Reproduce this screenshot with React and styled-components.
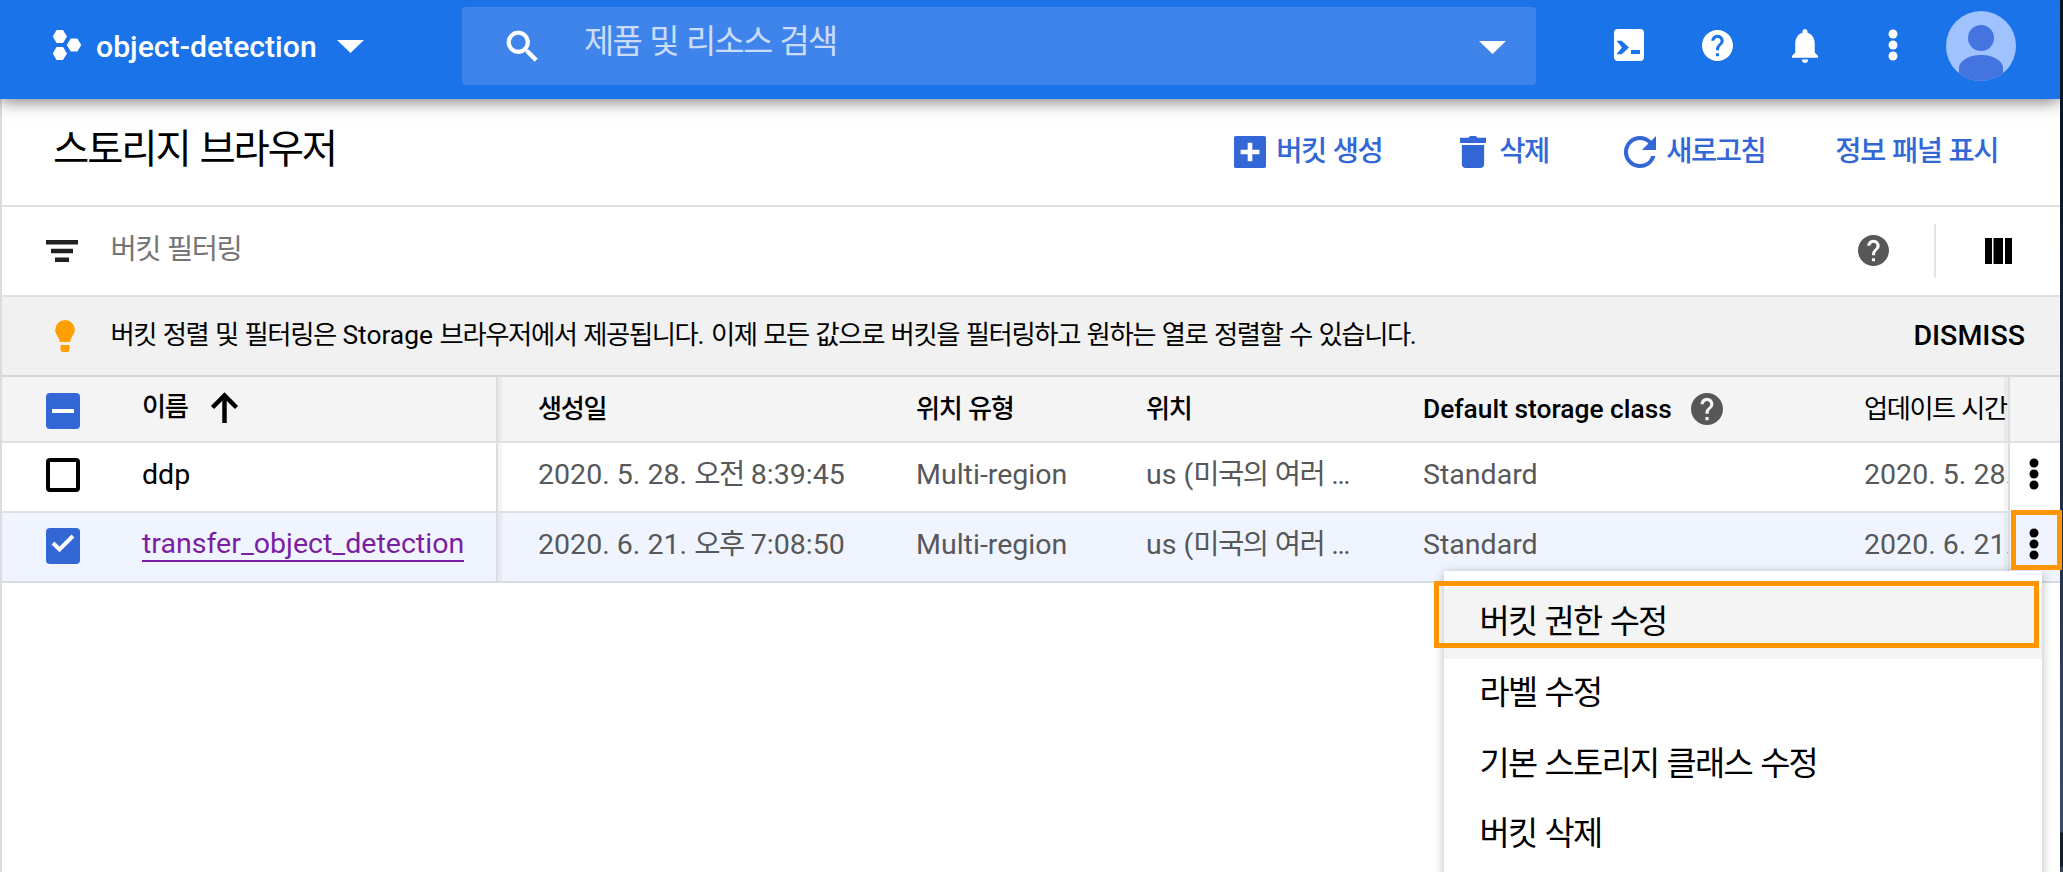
import React from "react";
import styled, { createGlobalStyle } from "styled-components";

const Global = createGlobalStyle`
  * { box-sizing: border-box; }
  html, body { margin: 0; padding: 0; overflow: hidden; }
  body { font-family: Roboto, "Noto Sans CJK KR", sans-serif; color: #000; background: #fff; }
`;

const Screen = styled.div`
  position: relative;
  display: flex;
  width: 2063px;
  height: 872px;
  overflow: hidden;
`;
const Console = styled.div`
  position: relative;
  display: flex;
  flex-direction: column;
  width: 2060px;
  flex: none;
  background: #fff;
`;
const DesktopEdge = styled.div`
  flex: 1;
  background: linear-gradient(#081322 0, #0c1728 180px, #1d2a44 420px, #22304c 560px, #33425e 700px, #3b4a66 832px, #141c2c 833px, #141c2c 866px, #333e52 867px);
`;

/* Hangul set tighter than the Latin text around it */
const Ko = styled.span`
  letter-spacing: -0.053em;
`;
const Label = styled.span`
  font-size: ${(p) => p.$size || 28.55}px;
  font-weight: ${(p) => p.$weight || 400};
  line-height: 40px;
  white-space: pre;
  color: ${(p) => p.$color || "inherit"};
`;

const TopBar = styled.header`
  position: relative;
  z-index: 3;
  display: flex;
  align-items: center;
  height: 99px;
  flex: none;
  padding-left: 52px;
  background: #1a73e8;
  color: #fff;
  box-shadow: 0 2px 16px rgba(0, 0, 0, 0.55);
  clip-path: inset(0 0 -30px 0);
`;
const Project = styled.div`
  display: flex;
  align-items: center;
  width: 410px;
  height: 99px;
  padding-bottom: 10px;
`;
const ProjectName = styled(Label)`
  margin: 4px 20px 0 14px;
  width: 221px;
`;
const Search = styled.div`
  display: flex;
  align-items: center;
  width: 1074px;
  height: 78px;
  margin-bottom: 7px;
  padding: 0 30px 0 44.5px;
  border-radius: 4px;
  background: #3f84eb;
`;
const SearchHint = styled(Label)`
  flex: 1;
  margin: 0 0 8px 46.5px;
`;
const Tools = styled.div`
  display: flex;
  align-items: center;
  flex: 1;
  height: 99px;
  padding: 0 0 9px 78px;
`;
const Glyph = styled.svg`
  display: block;
  flex: none;
  overflow: visible;
`;
const CaretGlyph = styled(Glyph)`
  margin-top: ${(p) => p.$drop}px;
`;
const Tool = styled.div`
  display: flex;
  align-items: center;
  margin-left: ${(p) => p.$before || 0}px;
  padding-top: ${(p) => p.$drop || 0}px;
`;

const Page = styled.main`
  display: flex;
  flex-direction: column;
  flex: 1;
  border-left: 2px solid #dcdcdc;
`;
const TitleBar = styled.div`
  display: flex;
  align-items: center;
  height: 108px;
  padding: 0 62px 0 51px;
  border-bottom: 2px solid #e0e0e0;
`;
const Title = styled.h1`
  flex: 1;
  margin: 0;
  padding-bottom: 4px;
  font-size: 39.4px;
  font-weight: 400;
  line-height: 48px;
`;
const Action = styled.button`
  display: flex;
  align-items: center;
  gap: ${(p) => p.$gap || 10}px;
  margin-left: ${(p) => p.$before || 0}px;
  padding: 0;
  border: 0;
  background: none;
  font-family: inherit;
  color: #3367d6;
`;
const FilterBar = styled.div`
  display: flex;
  align-items: center;
  height: 90px;
  padding: 0 48px 1px 44px;
  border-bottom: 2px solid #e0e0e0;
`;
const FilterHint = styled(Label)`
  flex: 1;
  margin: 0 0 2px 32.5px;
`;
const Rule = styled.div`
  width: 2px;
  height: 54px;
  margin: 0 49px 0 45px;
  background: #e4e4e4;
`;
const Banner = styled.div`
  display: flex;
  align-items: center;
  height: 80px;
  padding: 0 35px 0 53px;
  border-bottom: 2px solid #d6d6d6;
  background: #f1f1f1;
`;
const BannerText = styled(Label)`
  flex: 1;
  margin: 0 0 3px 35.5px;
`;

const Row = styled.div`
  display: grid;
  grid-template-columns: 140px 356px 378px 230px 277px 441px 186px 50px;
  height: ${(p) => (p.$head ? 66 : 70)}px;
  border-bottom: 2px solid ${(p) => (p.$selected ? "#d8dbe4" : "#e0e0e0")};
  background: ${(p) => (p.$head ? "#f4f4f4" : p.$selected ? "#f0f4fe" : "#fff")};
  color: ${(p) => (p.$head ? "#000" : "#575859")};
`;
const Cell = styled.div`
  display: flex;
  align-items: center;
  gap: 19px;
  min-width: 0;
  overflow: hidden;
  padding: 0 0 ${(p) => p.$lift || 5}px 40px;
`;
const CheckCell = styled(Cell)`
  padding: ${(p) => p.$drop || 0}px 0 ${(p) => p.$lift || 0}px 44px;
`;
const NameCell = styled(Cell)`
  gap: 24px;
  overflow: visible;
  padding-left: 0;
  border-right: 2px solid #dcdcde;
  box-shadow: 4px 0 0 rgba(0, 0, 0, 0.04);
  color: #000;
`;
const LastCell = styled(Cell)`
  border-right: 2px solid #dcdcde;
  box-shadow: inset -4px 0 0 rgba(0, 0, 0, 0.04);
`;
const MoreCell = styled(Cell)`
  padding: 0 0 7px 19px;
  overflow: visible;
`;
const BucketLink = styled(Label)`
  border-bottom: 2px solid #7b1fa2;
  line-height: 32px;
  margin-top: 1px;
  color: #7b1fa2;
`;
const Check = styled.span`
  display: flex;
  align-items: center;
  justify-content: center;
  width: 34px;
  height: ${(p) => (p.$on ? 36 : 34)}px;
  padding-bottom: ${(p) => p.$markLift || 0}px;
  border: ${(p) => (p.$on ? "0" : "4px solid #000")};
  border-radius: 4px;
  background: ${(p) => (p.$on ? "#3367d6" : "#fff")};
`;

const Menu = styled.div`
  position: absolute;
  z-index: 4;
  left: 1444px;
  top: 571px;
  width: 598px;
  height: 340px;
  padding-top: 16px;
  background: #fff;
  box-shadow: 0 2px 10px rgba(0, 0, 0, 0.28);
`;
const MenuItem = styled.div`
  display: flex;
  align-items: center;
  height: ${(p) => (p.$active ? 72 : 70.7)}px;
  padding: 0 35.5px ${(p) => (p.$active ? 2 : 3)}px;
  background: ${(p) => (p.$active ? "#f4f4f4" : "#fff")};
`;
const Marker = styled.div`
  position: absolute;
  z-index: 5;
  left: ${(p) => p.$x}px;
  top: ${(p) => p.$y}px;
  width: ${(p) => p.$w}px;
  height: ${(p) => p.$h}px;
  border: 5px solid #ff9500;
`;

const Caret = ({ drop }) => (
  <CaretGlyph $drop={drop} width="27" height="13" viewBox="0 0 27 13"><path d="M0 0h27L13.500 13z" fill="#fff" /></CaretGlyph>
);
const Dots = ({ color = "#000" }) => (
  <Glyph width="10" height="32" viewBox="0 0 10 32" fill={color}>
    <circle cx="5" cy="5" r="4.500" /><circle cx="5" cy="16" r="4.500" /><circle cx="5" cy="27" r="4.500" />
  </Glyph>
);
const Help = ({ color = "#575757", size = 32 }) => (
  <Glyph width={size} height={size} viewBox="2 2 20 20">
    <path fill={color} d="M12 2C6.480 2 2 6.480 2 12s4.480 10 10 10 10-4.480 10-10S17.520 2 12 2zm1 17h-2v-2h2v2zm2.070-7.750l-.9.920C13.450 12.900 13 13.500 13 15h-2v-.5c0-1.100.45-2.100 1.170-2.830l1.240-1.260c.37-.36.59-.86.59-1.410 0-1.100-.9-2-2-2s-2 .9-2 2H8c0-2.210 1.790-4 4-4s4 1.790 4 4c0 .88-.36 1.680-.93 2.250z" />
  </Glyph>
);

const buckets = [
  { name: "ddp", date: "2020. 5. 28. ", half: "오전", time: " 8:39:45", updated: "2020. 5. 28." },
  { name: "transfer_object_detection", date: "2020. 6. 21. ", half: "오후", time: " 7:08:50", updated: "2020. 6. 21.", selected: true },
];

/* Sets each Hangul run in Ko and leaves Latin text and spaces as they are */
const ko = (text) =>
  text.split(/([\uac00-\ud7a3]+)/).map((part, i) => (i % 2 ? <Ko key={i}>{part}</Ko> : part));

export default function App() {
  return (
    <Screen>
      <Global />
      <Console>
        <TopBar>
          <Project>
            <Glyph width="30" height="30" viewBox="0 0 30 30" fill="#fff">
              <path d="M4.500 0h6.500L15 6.500 11 13H4.500L0.800 6.500zM4.500 17h6.500L15 23.500 11 30H4.500L0.800 23.500zM18.800 8.500h6.500L29.300 15l-4 6.500h-6.500L14.800 15z" />
            </Glyph>
            <ProjectName $size={30.2} $weight={500}>object-detection</ProjectName>
            <Caret drop={4} />
          </Project>
          <Search>
            <Glyph width="31" height="31" viewBox="3 3 17.900 17.900" fill="#fff" stroke="#fff" strokeWidth="0.500">
              <path d="M15.500 14h-.79l-.28-.27A6.471 6.471 0 0 0 16 9.500 6.500 6.500 0 1 0 9.500 16c1.610 0 3.090-.59 4.230-1.570l.27.280v.79l5 4.990L20.490 19l-4.990-5zm-6 0C7.010 14 5 11.990 5 9.500S7.010 5 9.500 5 14 7.010 14 9.500 11.990 14 9.500 14z" />
            </Glyph>
            <SearchHint $size={32.9} $color="#cbdcf9">{ko("제품 및 리소스 검색")}</SearchHint>
            <Caret drop={3} />
          </Search>
          <Tools>
            <Tool>
              <Glyph width="30" height="32" viewBox="0 0 30 32">
                <rect width="30" height="32" rx="4" fill="#fff" />
                <path d="M2.500 11.800h5.200l7.300 6.700-7.300 6.700H2.500l5.500-6.700z" fill="#1a73e8" />
                <path d="M17 21h9v4h-9z" fill="#1a73e8" />
              </Glyph>
            </Tool>
            <Tool $before={57.5}><Help color="#fff" size={31} /></Tool>
            <Tool $before={59.5} $drop={2}>
              <Glyph width="26" height="34" viewBox="4 2.500 16 19.500" preserveAspectRatio="none" fill="#fff">
                <path d="M12 22c1.100 0 2-.9 2-2h-4c0 1.100.89 2 2 2zm6-6v-5c0-3.070-1.640-5.640-4.500-6.320V4c0-.83-.67-1.500-1.500-1.500s-1.500.67-1.500 1.500v.68C7.630 5.360 6 7.920 6 11v5l-2 2v1h16v-1l-2-2z" />
              </Glyph>
            </Tool>
            <Tool $before={70}><Dots color="#fff" /></Tool>
            <Tool $before={48} $drop={2}>
              <Glyph width="70" height="70" viewBox="0 0 70 70">
                <clipPath id="face"><circle cx="35" cy="35" r="35" /></clipPath>
                <circle cx="35" cy="35" r="35" fill="#a0c3ff" />
                <g clipPath="url(#face)" fill="#4374e0">
                  <circle cx="35" cy="27" r="13" />
                  <path d="M13 70V57c0-7 10-13 22-13s22 6 22 13v13z" />
                </g>
              </Glyph>
            </Tool>
          </Tools>
        </TopBar>

        <Page>
          <TitleBar>
            <Title>{ko("스토리지 브라우저")}</Title>
            <Action>
              <Glyph width="32" height="32" viewBox="3 3 18 18" fill="currentColor">
                <path d="M20 3H4c-.55 0-1 .45-1 1v16c0 .55.45 1 1 1h16c.55 0 1-.45 1-1V4c0-.55-.45-1-1-1zm-2.700 10.200h-4v4h-2.600v-4h-4v-2.400h4v-4h2.600v4h4v2.400z" />
              </Glyph>
              <Label $weight={500}>{ko("버킷 생성")}</Label>
            </Action>
            <Action $before={78} $gap={13}>
              <Glyph width="26" height="32" viewBox="5 3 14 18" preserveAspectRatio="none" fill="currentColor">
                <path d="M6 19c0 1.100.9 2 2 2h8c1.100 0 2-.9 2-2V8H6v11zM19 4h-4.500l-1-1h-3l-1 1H5v3h14V4z" />
              </Glyph>
              <Label $weight={500}>{ko("삭제")}</Label>
            </Action>
            <Action $before={75.5}>
              <Glyph width="32" height="32" viewBox="4 4 16 16" fill="currentColor">
                <path d="M17.650 6.350A7.958 7.958 0 0 0 12 4a8 8 0 1 0 7.730 10h-2.080A5.990 5.990 0 0 1 12 18a6 6 0 1 1 0-12c1.660 0 3.140.69 4.220 1.780L13 11h7V4l-2.350 2.350z" />
              </Glyph>
              <Label $weight={500}>{ko("새로고침")}</Label>
            </Action>
            <Action $before={70}>
              <Label $weight={500}>{ko("정보 패널 표시")}</Label>
            </Action>
          </TitleBar>

          <FilterBar>
            <Glyph width="32" height="22" viewBox="0 0 32 22" fill="#212121">
              <path d="M0 0h32v4.500H0zM5 8.800h22v4.500H5zM9 17.500h14V22H9z" />
            </Glyph>
            <FilterHint $color="#757575">{ko("버킷 필터링")}</FilterHint>
            <Help size={31} />
            <Rule />
            <Glyph width="27" height="26" viewBox="0 0 27 26"><path d="M0 0h7v26H0zM8.500 0h9.500v26H8.500zM20 0h7v26h-7z" /></Glyph>
          </FilterBar>

          <Banner>
            <Glyph width="20" height="32" viewBox="0 0 20 32" fill="#ff9f00">
              <path d="M10 0a9.800 9.800 0 0 0-9.800 10c0 4 3.300 6 4.800 12h10c1.500-6 4.800-8 4.800-12A9.800 9.800 0 0 0 10 0zM5.500 25h9v4c0 2-1 3-2 3h-5c-1 0-2-1-2-3z" />
            </Glyph>
            <BannerText $size={26.37}>{ko("버킷 정렬 및 필터링은 Storage 브라우저에서 제공됩니다. 이제 모든 값으로 버킷을 필터링하고 원하는 열로 정렬할 수 있습니다.")}</BannerText>
            <Label $weight={500}>DISMISS</Label>
          </Banner>

          <Row $head>
            <CheckCell $drop={4}>
              <Check $on><Glyph width="22" height="4" viewBox="0 0 22 4"><path d="M0 0h22v4H0z" fill="#fff" /></Glyph></Check>
            </CheckCell>
            <NameCell $lift={4}>
              <Label $size={26.2} $weight={500}>{ko("이름")}</Label>
              <Glyph width="27" height="31" viewBox="0 0 27 31" fill="none" stroke="#000" strokeWidth="4.500">
                <path d="M13.500 31V3M1.500 15.500l12-12 12 12" />
              </Glyph>
            </NameCell>
            <Cell $lift={1}><Label $size={26.2} $weight={500}>{ko("생성일")}</Label></Cell>
            <Cell $lift={1}><Label $size={26.2} $weight={500}>{ko("위치 유형")}</Label></Cell>
            <Cell $lift={1}><Label $size={26.2} $weight={500}>{ko("위치")}</Label></Cell>
            <Cell $lift={1}><Label $size={26.35} $weight={500}>Default storage class</Label><Help /></Cell>
            <LastCell $lift={1}><Label $size={26.2}>{ko("업데이트 시간")}</Label></LastCell>
            <Cell />
          </Row>

          {buckets.map((b) => (
            <Row key={b.name} $selected={b.selected}>
              <CheckCell $lift={b.selected ? 3 : 5}>
                <Check $on={b.selected} $markLift={b.selected ? 5 : 0}>
                  {b.selected && (
                    <Glyph width="22" height="18" viewBox="0 0 22 18" fill="none" stroke="#fff" strokeWidth="4">
                      <path d="M1 9l6.500 6.500L21 2" />
                    </Glyph>
                  )}
                </Check>
              </CheckCell>
              <NameCell>{b.selected ? <BucketLink>{b.name}</BucketLink> : <Label>{b.name}</Label>}</NameCell>
              <Cell><Label>{b.date}<Ko>{b.half}</Ko>{b.time}</Label></Cell>
              <Cell><Label>Multi-region</Label></Cell>
              <Cell><Label>{ko("us (미국의 여러 …")}</Label></Cell>
              <Cell><Label>Standard</Label></Cell>
              <LastCell><Label>{b.updated}</Label></LastCell>
              <MoreCell><Dots /></MoreCell>
            </Row>
          ))}
        </Page>
      </Console>
      <DesktopEdge />

      <Menu>
        <MenuItem $active><Label $size={32.85}>{ko("버킷 권한 수정")}</Label></MenuItem>
        <MenuItem><Label $size={32.85}>{ko("라벨 수정")}</Label></MenuItem>
        <MenuItem><Label $size={32.85}>{ko("기본 스토리지 클래스 수정")}</Label></MenuItem>
        <MenuItem><Label $size={32.85}>{ko("버킷 삭제")}</Label></MenuItem>
      </Menu>
      <Marker $x={1434} $y={581} $w={605} $h={67} />
      <Marker $x={2011} $y={510} $w={51} $h={60} />
    </Screen>
  );
}
